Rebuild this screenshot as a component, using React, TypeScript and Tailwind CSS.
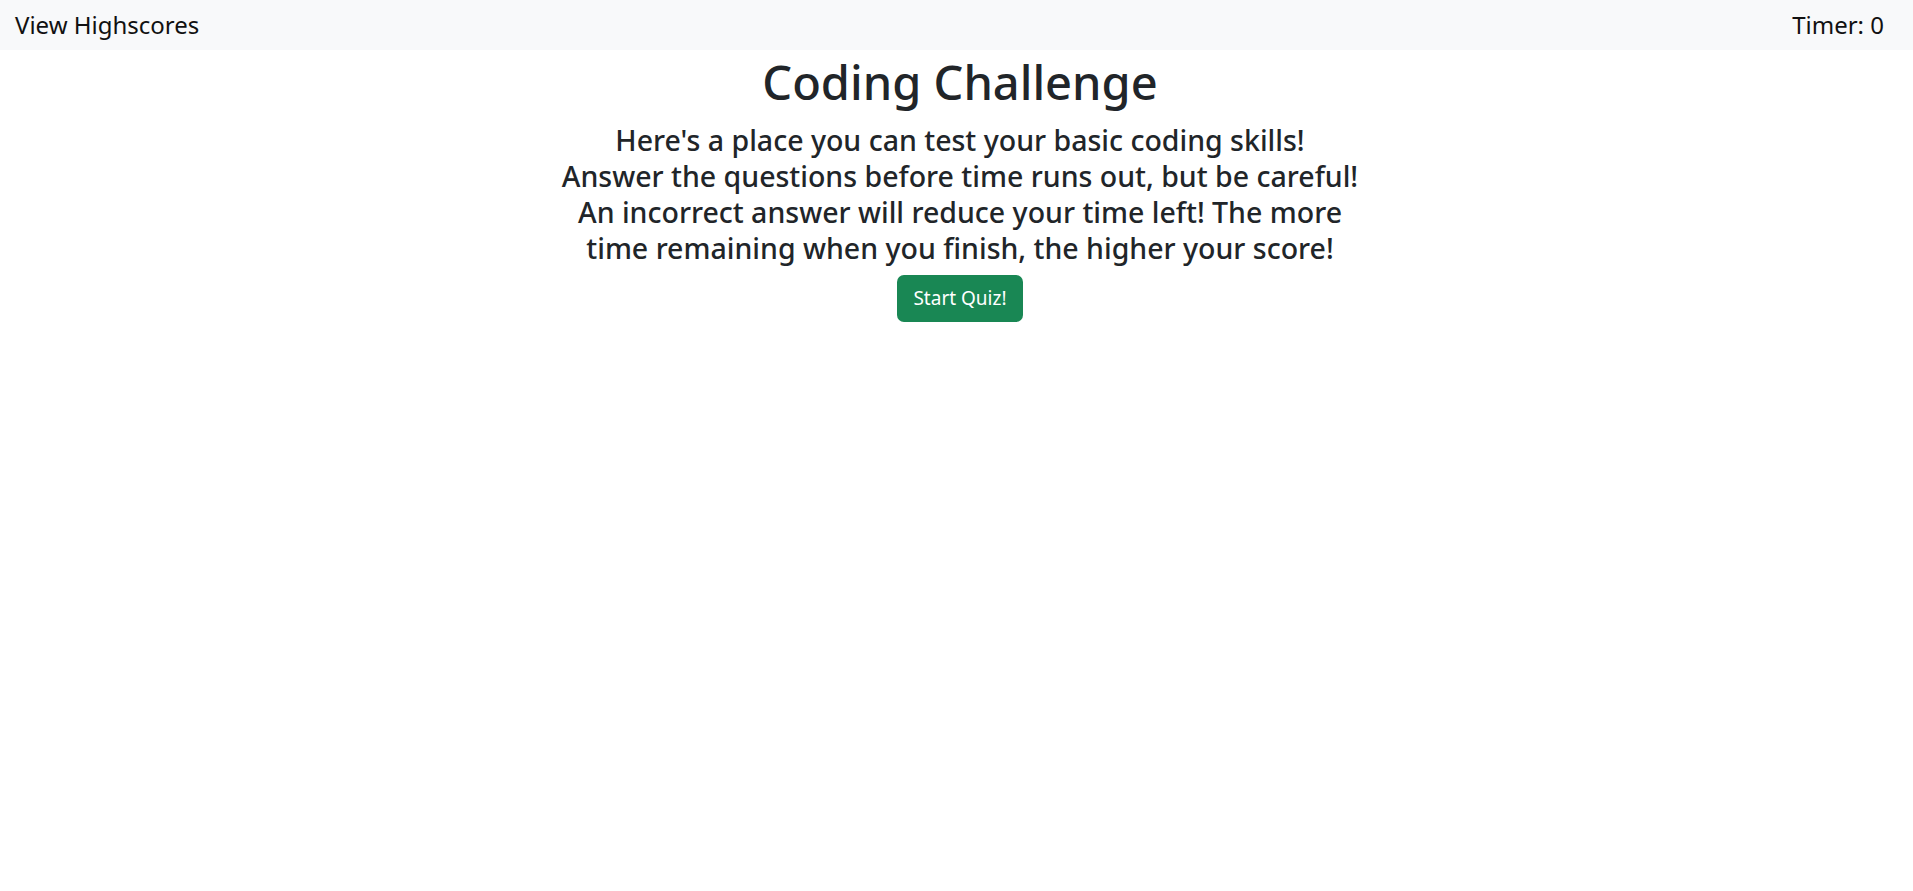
import React from "react";

export default function App() {
  return (
    <div className="min-h-screen bg-white font-['Noto_Sans',sans-serif] text-[#212529]">
      <nav className="flex h-[50px] items-center justify-between bg-[#f8f9fa] pl-[15px] pr-[29px] text-[24px] text-[#111]">
        <a className="cursor-pointer">View Highscores</a>
        <span>Timer: 0</span>
      </nav>
      <main className="flex flex-col items-center pl-[7px]">
        <h1 className="pt-[4px] text-[47px] font-medium leading-[56px]">Coding Challenge</h1>
        <p className="mt-[12px] text-center text-[28.5px] font-medium leading-[36px]">
          Here's a place you can test your basic coding skills!
          <br />
          Answer the questions before time runs out, but be careful!
          <br />
          An incorrect answer will reduce your time left! The more
          <br />
          time remaining when you finish, the higher your score!
        </p>
        <button className="mt-[9px] flex h-[47px] items-center rounded-[7px] bg-[#198754] px-[16px] text-[19px] text-white">
          Start Quiz!
        </button>
      </main>
    </div>
  );
}
